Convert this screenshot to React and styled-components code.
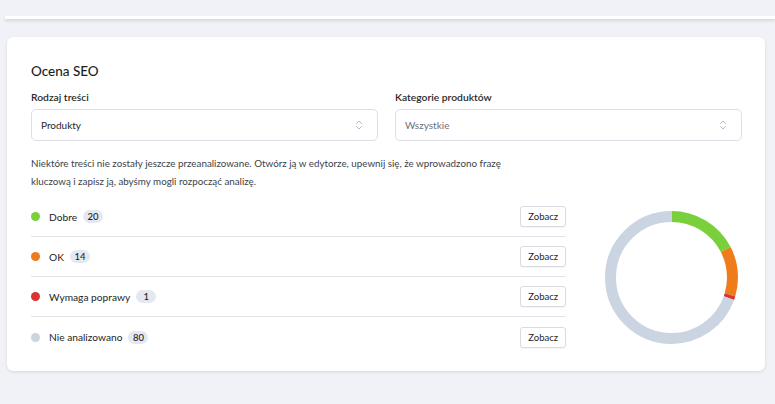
import React from "react";
import styled, { createGlobalStyle } from "styled-components";
import { ChevronsUpDown } from "lucide-react";

const GlobalStyle = createGlobalStyle`
  html, body {
    margin: 0;
    padding: 0;
    background: #f0f2f7;
    font-family: Lato, "Noto Sans", sans-serif;
    color: #1e1e1e;
  }
`;

const Page = styled.div`
  width: 775px;
  height: 404px;
  overflow: hidden;
  display: flex;
  flex-direction: column;
`;

const TopCard = styled.div`
  height: 3px;
  margin: 16px 0 0 5px;
  background: #fff;
  box-shadow: 0 2px 3px rgba(30, 40, 60, 0.14);
`;

const Card = styled.section`
  margin: 18px 10px 0 7px;
  background: #fff;
  border-radius: 6px;
  box-shadow: 0 1px 3px rgba(30, 40, 60, 0.12);
  padding: 24px 23px 14px 24px;
`;

const Title = styled.h2`
  margin: 0;
  font-size: 13.5px;
  line-height: 20px;
  font-weight: 500;
`;

const Filters = styled.div`
  display: grid;
  grid-template-columns: 1fr 1fr;
  gap: 17px;
  margin-top: 8px;
`;

const Field = styled.div`
  display: flex;
  flex-direction: column;
  gap: 4px;
`;

const Label = styled.label`
  font-size: 10.3px;
  line-height: 16px;
  font-weight: 600;
  color: #2a2a2a;
`;

const Select = styled.div`
  height: 32px;
  border: 1px solid #dcdfe5;
  border-radius: 5px;
  display: flex;
  align-items: center;
  justify-content: space-between;
  padding: 0 12px 0 9px;
  font-size: 10px;
  color: ${(p) => (p.$muted ? "#6b7280" : "#1e1e1e")};
  box-sizing: border-box;
`;

const Note = styled.p`
  margin: 13px 0 0;
  font-size: 9.8px;
  line-height: 18px;
  color: #3c434a;
`;

const Body = styled.div`
  display: flex;
  align-items: center;
  gap: 39px;
  margin-top: 7px;
`;

const List = styled.div`
  flex: 1;
  display: flex;
  flex-direction: column;
`;

const Row = styled.div`
  height: 40px;
  display: flex;
  align-items: center;
  border-bottom: 1px solid #e2e4e9;
  box-sizing: border-box;
  &:last-child {
    border-bottom: none;
  }
`;

const Dot = styled.span`
  width: 9px;
  height: 9px;
  border-radius: 50%;
  background: ${(p) => p.$color};
  margin-right: 9px;
`;

const Name = styled.span`
  font-size: 10.2px;
  color: #1e1e1e;
`;

const Badge = styled.span`
  margin-left: 6px;
  min-width: 12px;
  height: 13px;
  padding: 0 4px;
  border-radius: 7px;
  background: #e3e8f1;
  font-size: 9.5px;
  font-weight: 500;
  line-height: 13px;
  text-align: center;
`;

const Button = styled.button`
  margin-left: auto;
  height: 21px;
  padding: 0 7px;
  border: 1px solid #d8dce2;
  border-radius: 3px;
  background: #fff;
  box-shadow: 0 1px 1px rgba(0, 0, 0, 0.04);
  font-family: inherit;
  font-size: 9.5px;
  color: #1e1e1e;
`;

const Chart = styled.svg`
  width: 133px;
  height: 133px;
  margin-right: 4px;
  flex-shrink: 0;
`;

const items = [
  { name: "Dobre", count: 20, color: "#7ad03a" },
  { name: "OK", count: 14, color: "#ee7c1b" },
  { name: "Wymaga poprawy", count: 1, color: "#dc3232" },
  { name: "Nie analizowano", count: 80, color: "#cbd5e1" },
];

const Donut = () => {
  const r = 61;
  const c = 2 * Math.PI * r;
  const total = items.reduce((s, i) => s + i.count, 0);
  let offset = 0;
  return (
    <Chart viewBox="0 0 133 133">
      <g transform="rotate(-90 66.5 66.5)">
        {items.map((i) => {
          const len = (i.count / total) * c;
          const seg = (
            <circle
              key={i.name}
              cx="66.5"
              cy="66.5"
              r={r}
              fill="none"
              stroke={i.color}
              strokeWidth="11"
              strokeDasharray={`${len} ${c - len}`}
              strokeDashoffset={-offset}
            />
          );
          offset += len;
          return seg;
        })}
      </g>
    </Chart>
  );
};

export default function App() {
  return (
    <Page>
      <GlobalStyle />
      <TopCard />
      <Card>
        <Title>Ocena SEO</Title>
        <Filters>
          <Field>
            <Label>Rodzaj treści</Label>
            <Select>
              Produkty
              <ChevronsUpDown size={12} color="#a0a6b0" strokeWidth={1.5} />
            </Select>
          </Field>
          <Field>
            <Label>Kategorie produktów</Label>
            <Select $muted>
              Wszystkie
              <ChevronsUpDown size={12} color="#a0a6b0" strokeWidth={1.5} />
            </Select>
          </Field>
        </Filters>
        <Note>
          Niektóre treści nie zostały jeszcze przeanalizowane. Otwórz ją w
          edytorze, upewnij się, że wprowadzono frazę
          <br />
          kluczową i zapisz ją, abyśmy mogli rozpocząć analizę.
        </Note>
        <Body>
          <List>
            {items.map((i) => (
              <Row key={i.name}>
                <Dot $color={i.color} />
                <Name>{i.name}</Name>
                <Badge>{i.count}</Badge>
                <Button>Zobacz</Button>
              </Row>
            ))}
          </List>
          <Donut />
        </Body>
      </Card>
    </Page>
  );
}
